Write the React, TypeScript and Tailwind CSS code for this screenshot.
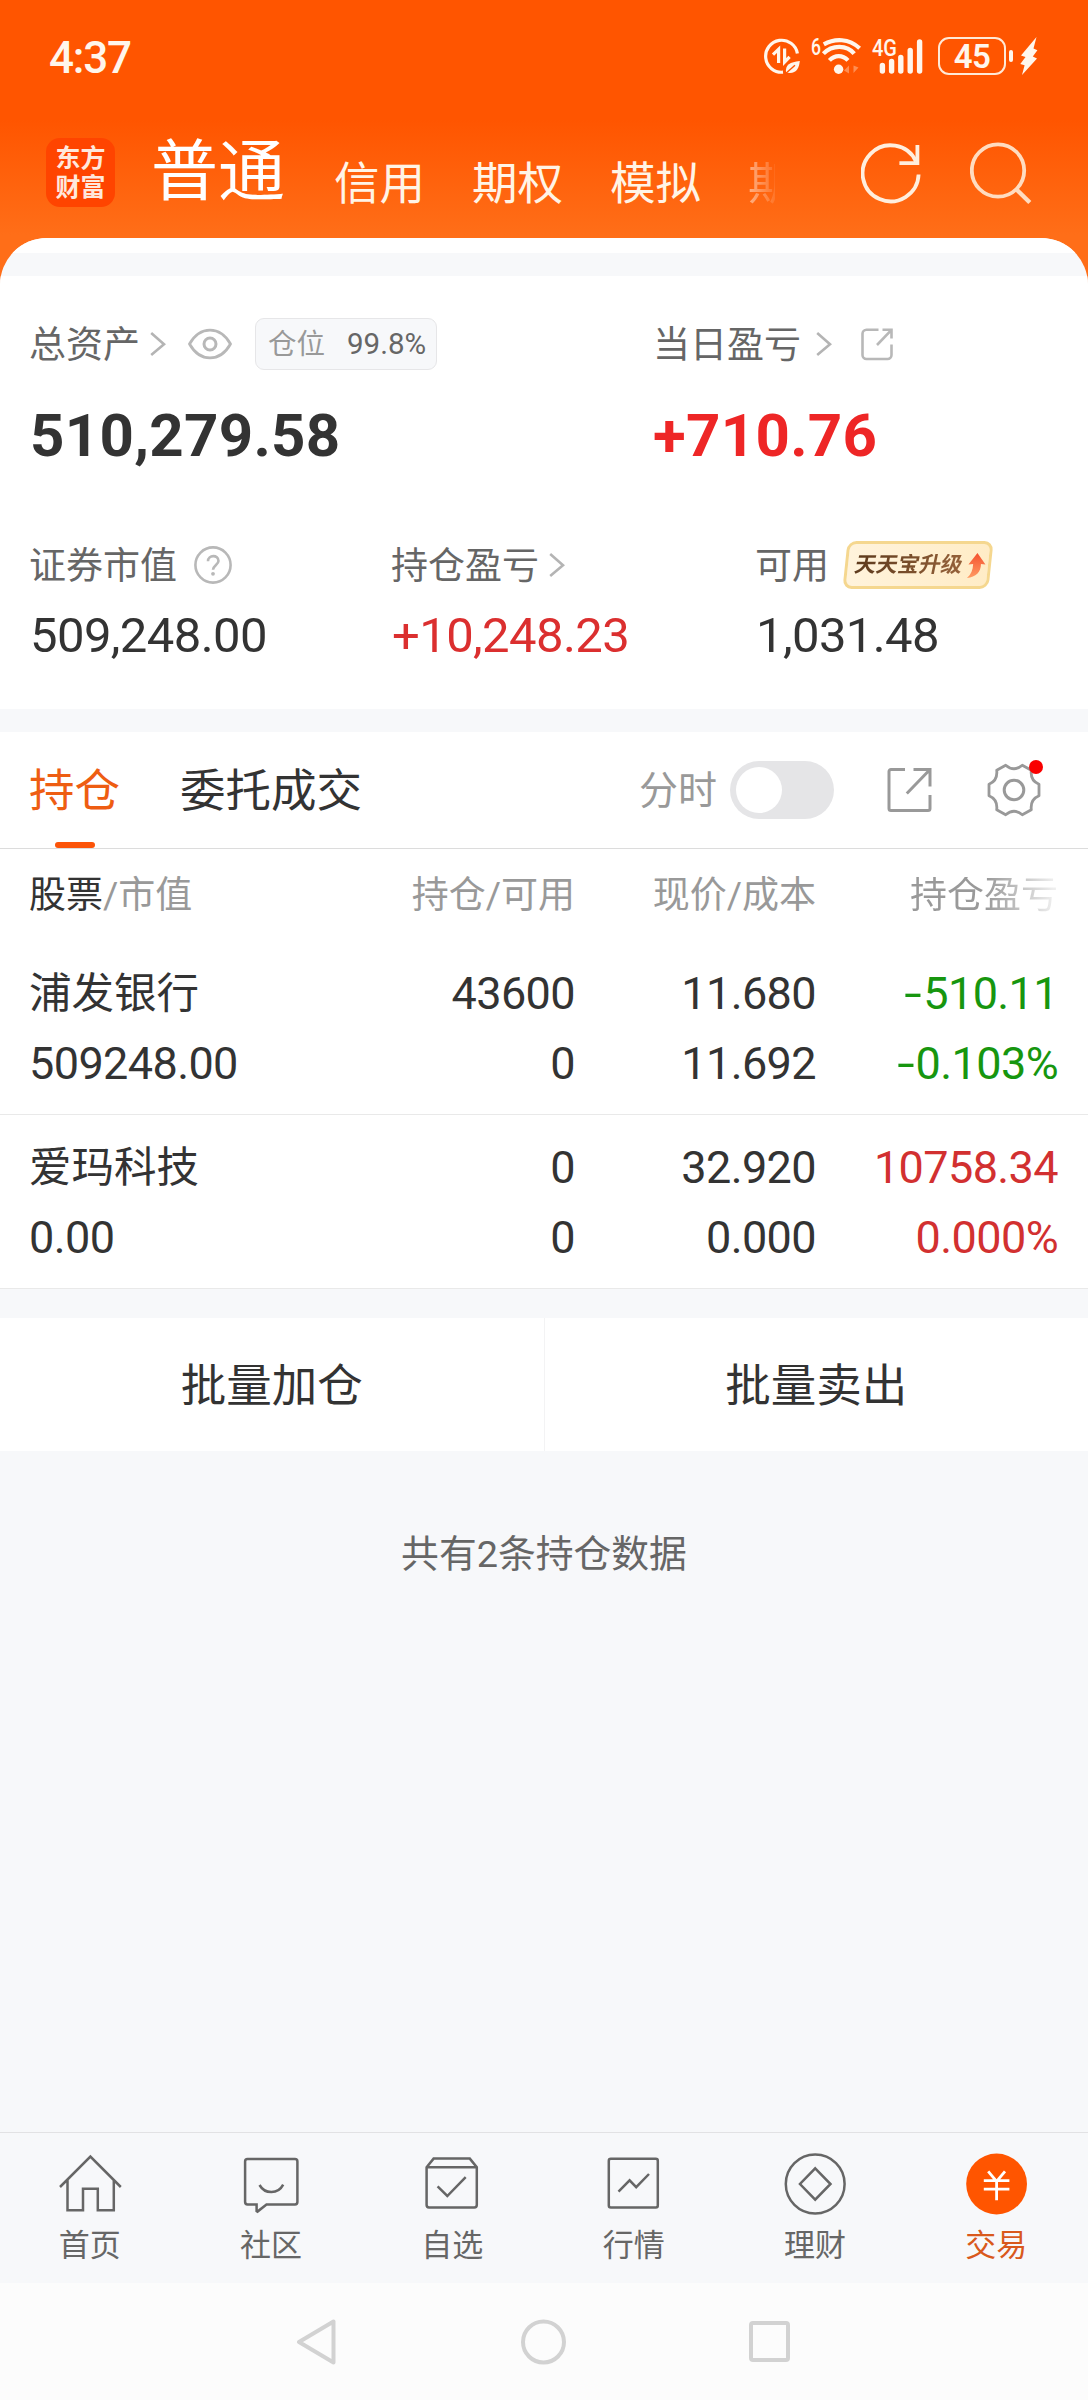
import React from "react";

const holdings = [
  {
    name: "浦发银行",
    value: "509248.00",
    amount: "43600",
    available: "0",
    price: "11.680",
    cost: "11.692",
    sign: "-",
    profit: "510.11",
    rate: "0.103%",
    color: "text-[#17960f]",
  },
  {
    name: "爱玛科技",
    value: "0.00",
    amount: "0",
    available: "0",
    price: "32.920",
    cost: "0.000",
    sign: "",
    profit: "10758.34",
    rate: "0.000%",
    color: "text-[#d23030]",
  },
];

const tabs = [
  {
    label: "首页",
    icon: (
      <path d="M0 34 30.4 3.6 60.8 34M7.5 27V57.2H23V35.8H37.8V57.2H53.8V27" />
    ),
  },
  {
    label: "社区",
    icon: (
      <>
        <path d="M6.5 6H54a2.4 2.4 0 0 1 2.4 2.4V49a2.4 2.4 0 0 1-2.4 2.4H25.5L16.5 58.6 15.6 58V51.4H6.5A2.4 2.4 0 0 1 4.1 49V8.4A2.4 2.4 0 0 1 6.5 6Z" />
        <path d="M18.5 32C24 41.5 37 41.5 42.2 31.6" />
      </>
    ),
  },
  {
    label: "自选",
    icon: (
      <>
        <path d="M4.6 14.2 11.6 5.6H47.8L54.8 14.2V52a2.4 2.4 0 0 1-2.4 2.4H7A2.4 2.4 0 0 1 4.6 52ZM4.6 14.2H54.8" />
        <path d="M15.6 33.4 25.3 43 43.7 24.2" />
      </>
    ),
  },
  {
    label: "行情",
    icon: (
      <>
        <rect x="4.8" y="5.8" width="49" height="48.8" rx="2" />
        <path d="M14.5 38.7 25.6 27.4 32.2 34.2 45 21" />
      </>
    ),
  },
  {
    label: "理财",
    icon: (
      <>
        <circle cx="30.2" cy="31" r="29.4" />
        <path d="M30.2 15.4 45.5 31 30.2 46.6 15 31Z" />
      </>
    ),
  },
  {
    label: "交易",
    active: true,
    icon: (
      <>
        <circle cx="30.6" cy="31" r="30.4" fill="#ff5500" stroke="none" />
        <path
          d="M22.2 18.3 30.6 28.4 39 18.3M17.8 27.6H43.4M17.8 36.2H43.4M30.6 28V47.3"
          stroke="#fff"
          strokeWidth="2.8"
        />
      </>
    ),
  },
];

function Chevron({ className = "" }: { className?: string }) {
  return (
    <svg
      className={`h-6 w-4 shrink-0 ${className}`}
      viewBox="0 0 16 24"
      fill="none"
      stroke="#b4b4b4"
      strokeWidth="2.6"
    >
      <path d="M1.2 1 14 12.2 1.2 23" />
    </svg>
  );
}

function StatusBar() {
  return (
    <div className="flex h-[112px] items-center pl-[49px] text-[#fff6ec]">
      <span className="w-[715px] pt-1 text-[44px] leading-none font-medium tracking-[-1.2px]">
        4:37
      </span>

      {/* data saver */}
      <svg className="h-10 w-10" viewBox="0 0 40 40" fill="none">
        <path
          d="M33.4 17.5A16 16 0 1 0 19 36.2"
          stroke="currentColor"
          strokeWidth="3.2"
        />
        <path
          d="M9 18.6 14.6 13.2V27M20.6 12.5V26L25.6 20.8"
          stroke="currentColor"
          strokeWidth="3.2"
        />
        <path d="M35.8 25C26 26 21 29 22 36.5 32 38.5 35 33 35.8 25Z" fill="currentColor" />
        <path d="M20.5 38.5 31 29.3" stroke="#ff5500" strokeWidth="1.4" />
      </svg>

      {/* wifi */}
      <svg className="ml-[7px] h-10 w-[52px] overflow-visible" viewBox="0 0 52 40" fill="none">
        <text x="0" y="19" fontSize="23" fontWeight="500" fill="currentColor" textLength="10" lengthAdjust="spacingAndGlyphs">
          6
        </text>
        <g stroke="currentColor" strokeWidth="4.2">
          <path d="M12.8 8.4C24 2 38 2.5 48.6 12.2" />
          <path d="M12.4 17.6C21 8.5 36 8.5 43.2 17.6" />
          <path d="M18.4 24.4C24 18.6 31.5 18.6 37 24.4" />
        </g>
        <circle cx="27.6" cy="33.2" r="4.7" fill="currentColor" />
        <path d="M33 34.5 38 29.5V37.5ZM47.5 31.5 42.5 37V29.5ZM40.2 29V38" fill="#ff8e52" />
      </svg>

      {/* signal */}
      <svg className="ml-[9px] h-10 w-[54px] overflow-visible" viewBox="0 0 54 40" fill="none">
        <text x="0" y="20" fontSize="23" fontWeight="500" fill="currentColor" textLength="25" lengthAdjust="spacingAndGlyphs">
          4G
        </text>
        <path
          d="M10.4 29.5V35M19.6 25.5V35M28.8 21.5V35M38.2 14.5V35M47.6 6V35"
          stroke="currentColor"
          strokeWidth="5.4"
          strokeLinecap="round"
        />
      </svg>

      <span className="ml-[12px] flex h-[38px] w-[68px] items-center justify-center rounded-[11px] border-[2.6px] border-[#ffe9d6] pt-[1px] text-[33px] leading-none font-semibold tracking-[-0.5px]">
        45
      </span>
      <span className="ml-[3px] h-3 w-1 rounded-full bg-current" />
      <svg className="ml-[7px] h-[38px] w-[18px]" viewBox="0 0 18 38" fill="currentColor">
        <path d="M16.5 0 1 18.5 5.5 20 .3 27 4.6 28.3 2 38 17 21.5 12.8 19.6 17.4 13.2 13.5 11.6Z" />
      </svg>
    </div>
  );
}

function Header() {
  return (
    <div className="h-[238px]">
      <StatusBar />
      <div className="flex h-[121px] items-center text-[45.5px] leading-none text-[#fff4e6]">
        <div className="ml-[46px] flex h-[69px] w-[69px] items-center justify-center rounded-[14px] bg-[#ff4400]">
          <p className="w-[50px] text-[25px] leading-[29px] font-bold break-all text-[#ffe8dc]">
            东方财富
          </p>
        </div>
        <span className="ml-9 text-[67px] text-white">普通</span>
        <span className="ml-[49px] pt-6">信用</span>
        <span className="ml-[47px] pt-6">期权</span>
        <span className="ml-[47px] pt-6">模拟</span>
        <span className="ml-[47px] w-[27px] overflow-hidden bg-linear-to-r from-white/50 to-white/10 bg-clip-text pt-6 whitespace-nowrap text-transparent">
          期
        </span>
        <svg
          className="ml-[86px] h-[62px] w-[62px]"
          viewBox="0 0 62 62"
          fill="none"
          stroke="#ffeedd"
          strokeWidth="3.8"
        >
          <path d="M57.6 32.5A28 28 0 1 1 55 19.5" />
          <path d="M56.4 3V21.2H38.4" />
        </svg>
        <svg
          className="ml-[47px] h-[64px] w-[64px]"
          viewBox="0 0 64 64"
          fill="none"
          stroke="#ffdcc0"
          strokeWidth="3.8"
        >
          <circle cx="28" cy="29.5" r="26.2" />
          <path d="M46.5 48.5 59.8 61.5" strokeWidth="4.4" />
        </svg>
      </div>
    </div>
  );
}

function Assets() {
  return (
    <section className="h-[433px] bg-white pt-[42px] pl-[30px] text-[37px] leading-none text-[#666]">
      <div className="flex">
        <div className="w-[623px]">
          <div className="flex h-[52px] items-center">
            <span className="-ml-px pt-0.5">总资产</span>
            <Chevron className="ml-[10px]" />
            <svg
              className="ml-[22px] h-8 w-11"
              viewBox="0 0 44 32"
              fill="none"
              stroke="#b8b8b8"
              strokeWidth="2.8"
            >
              <path d="M1.5 16C12-2.5 32-2.5 42.5 16 32 34.5 12 34.5 1.5 16Z" strokeLinejoin="round" />
              <circle cx="22" cy="16" r="6" strokeWidth="3" />
            </svg>
            <div className="ml-[23px] flex h-[52px] w-[182px] items-center rounded-[9px] border border-[#e6e6e8] bg-[#f7f8fa] pt-0.5 pl-3 text-[28.5px] text-[#999]">
              仓位
              <span className="ml-[22px] text-[29.5px] text-[#666]">99.8%</span>
            </div>
          </div>
          <div className="mt-[31px] text-[60px] leading-[70px] font-bold tracking-[0.3px] text-[#333]">
            510,279.58
          </div>
        </div>
        <div>
          <div className="flex h-[52px] items-center">
            <span className="pt-0.5">当日盈亏</span>
            <Chevron className="ml-[15px]" />
            <svg
              className="ml-[28px] h-[34px] w-[34px]"
              viewBox="0 0 34 34"
              fill="none"
              stroke="#b8b8b8"
              strokeWidth="2.6"
            >
              <path d="M18.5 2.8H6.5a4 4 0 0 0-4 4V28a4 4 0 0 0 4 4H27.5a4 4 0 0 0 4-4V17.5M22.5 2.8H31.5V11.5M31 3.3 17 18" />
            </svg>
          </div>
          <div className="mt-[31px] text-[60px] leading-[70px] font-bold tracking-[0.3px] text-[#ee2626]">
            +710.76
          </div>
        </div>
      </div>

      <div className="mt-[70px] flex">
        <div className="w-[362px]">
          <div className="flex h-12 items-center">
            <span className="-ml-px pt-0.5">证券市值</span>
            <svg className="ml-[17px] h-[38px] w-[38px]" viewBox="0 0 38 38" fill="none" stroke="#b8b8b8">
              <circle cx="19" cy="19" r="17.6" strokeWidth="2.6" />
              <path
                d="M14 15.2C14 8.5 24.5 8.5 24.5 15 24.5 18.5 19 19.5 19 23.8"
                strokeWidth="2.6"
              />
              <circle cx="19" cy="27.8" r="1.9" fill="#b8b8b8" stroke="none" />
            </svg>
          </div>
          <div className="mt-[17px] text-[49px] leading-[60px] tracking-[-0.6px] text-[#333]">
            509,248.00
          </div>
        </div>
        <div className="w-[364px]">
          <div className="flex h-12 items-center">
            <span className="-ml-px pt-0.5">持仓盈亏</span>
            <Chevron className="ml-[10px]" />
          </div>
          <div className="mt-[17px] text-[49px] leading-[60px] tracking-[-0.6px] text-[#db2f2f]">
            +10,248.23
          </div>
        </div>
        <div>
          <div className="flex h-12 items-center">
            <span className="-ml-px pt-0.5">可用</span>
            <div className="ml-[16px] flex h-12 w-[146px] -skew-x-6 items-center rounded-[9px] border-[3px] border-[#f5d78f] bg-linear-to-r from-[#fff3dc] to-[#ffecc6] pl-[7px]">
              <span className="-skew-x-6 bg-linear-to-r from-[#5d3a1c] to-[#96623a] bg-clip-text text-[21.5px] font-bold text-transparent">
                天天宝升级
              </span>
              <svg className="ml-[3px] h-[25px] w-5 skew-x-6" viewBox="0 0 20 25">
                <defs>
                  <linearGradient id="up" x1="0" y1="0" x2="0" y2="1">
                    <stop offset="0" stopColor="#f4512f" />
                    <stop offset="1" stopColor="#ff9b63" />
                  </linearGradient>
                </defs>
                <path
                  d="M11.5 0 19.5 11.5 15 11C15 19 10 24 1 25 5 21.5 7 17 7.2 11L2.5 11.5Z"
                  fill="url(#up)"
                />
              </svg>
            </div>
          </div>
          <div className="mt-[17px] text-[49px] leading-[60px] tracking-[-0.6px] text-[#333]">
            1,031.48
          </div>
        </div>
      </div>
    </section>
  );
}

function Positions() {
  return (
    <section className="bg-white">
      {/* tab bar */}
      <div className="flex h-[117px] items-center border-b border-[#dcdcdc] pl-[29px] text-[45.5px] leading-none text-[#333]">
        <div className="relative flex h-full items-center pt-1 text-[#ee5d12]">
          持仓
          <span className="absolute bottom-0 left-[26px] h-1.5 w-10 rounded-full bg-[#fc5409]" />
        </div>
        <span className="ml-[60px] pt-1">委托成交</span>
        <span className="ml-[277px] pt-0.5 text-[39px] text-[#999]">分时</span>
        <div className="ml-[13px] flex h-[58px] w-[104px] items-center rounded-full bg-[#e5e5e7] pl-1.5">
          <span className="h-[46px] w-[46px] rounded-full bg-white" />
        </div>
        <svg
          className="ml-[53px] h-[46px] w-[46px]"
          viewBox="0 0 46 46"
          fill="none"
          stroke="#999"
          strokeWidth="3"
        >
          <path d="M18 2.5H4a2 2 0 0 0-2 2V41.5a2 2 0 0 0 2 2H41a2 2 0 0 0 2-2V28M26.5 2.5H43V19.5M42.5 3 19.8 26.5" />
        </svg>
        <div className="relative ml-[53px] h-14 w-14">
          <svg className="h-14 w-14" viewBox="0 0 56 56" fill="none" stroke="#999" strokeWidth="2.8">
            <path d="M19.7 3.2 10.7 8.2C11.5 15 9.5 19.5 3 22.2V33.8C9.5 36.5 11.5 41 10.7 47.8L19.7 52.8C25 48.3 31 48.3 36.3 52.8L45.3 47.8C44.5 41 46.5 36.5 53 33.8V22.2C46.5 19.5 44.5 15 45.3 8.2L36.3 3.2C31 7.7 25 7.7 19.7 3.2Z" strokeLinejoin="round" />
            <circle cx="28" cy="28" r="9.8" strokeWidth="3" />
          </svg>
          <span className="absolute -top-0.5 -right-px h-3.5 w-3.5 rounded-full bg-[#f90000]" />
        </div>
      </div>

      {/* column titles */}
      <div className="grid h-[92px] grid-cols-[270px_276px_241px_242px] items-center pt-px pl-[29px] text-right text-[37px] leading-none text-[#999]">
        <span className="text-left">
          <span className="text-[#333]">股票</span>/市值
        </span>
        <span>持仓/可用</span>
        <span>现价/成本</span>
        <span className="bg-linear-to-r from-[#999] from-70% to-[#eee] to-98% bg-clip-text text-transparent">
          持仓盈亏
        </span>
      </div>

      {holdings.map((item, idx) => (
        <div
          key={idx}
          className="grid h-[174px] grid-cols-[270px_276px_241px_242px] border-b border-[#e9e9e9] pt-[18px] pl-[29px] text-right text-[45px] leading-[70px] tracking-[-0.6px] text-[#333]"
        >
          <div className="text-left">
            <div className="text-[42.5px] tracking-normal">{item.name}</div>
            <div>{item.value}</div>
          </div>
          <div>
            <div>{item.amount}</div>
            <div>{item.available}</div>
          </div>
          <div>
            <div>{item.price}</div>
            <div>{item.cost}</div>
          </div>
          <div className={item.color}>
            <div>
              <span className="mr-0.5 inline-block origin-right scale-x-140">{item.sign}</span>
              {item.profit}
            </div>
            <div>
              <span className="mr-0.5 inline-block origin-right scale-x-140">{item.sign}</span>
              {item.rate}
            </div>
          </div>
        </div>
      ))}
    </section>
  );
}

function TabBar() {
  return (
    <nav className="grid h-[151px] grid-cols-6 border-t border-[#e2e2e4] bg-[#f7f8fa] pt-5">
      {tabs.map((tab) => (
        <div key={tab.label} className="flex flex-col items-center">
          <svg
            className="h-[62px] w-[62px] overflow-visible"
            viewBox="0 0 62 62"
            fill="none"
            stroke="#666"
            strokeWidth="2.5"
          >
            {tab.icon}
          </svg>
          <span
            className={`mt-[15px] pr-0.5 text-[31px] leading-none ${tab.active ? "text-[#d9591c]" : "text-[#666]"}`}
          >
            {tab.label}
          </span>
        </div>
      ))}
    </nav>
  );
}

export default function App() {
  return (
    <div className="flex h-[2400px] w-[1088px] flex-col bg-[linear-gradient(#ff5500_120px,#ff6e18_235px)] font-[Roboto,'Noto_Sans_CJK_SC',sans-serif]">
      <Header />
      <main className="flex flex-1 flex-col overflow-hidden rounded-t-[47px] bg-[#f7f8fa]">
        <div className="h-[15px] bg-white" />
        <div className="h-[23px]" />
        <Assets />
        <div className="h-[23px]" />
        <Positions />

        <div className="mt-[29px] flex h-[133px] items-center bg-white pt-0 text-[45.5px] leading-none text-[#333]">
          <div className="flex h-full flex-1 items-center justify-center border-r border-[#f3f3f4] pt-1">
            批量加仓
          </div>
          <div className="flex h-full flex-1 items-center justify-center pt-1">批量卖出</div>
        </div>
        <p className="mt-[75px] text-center text-[37.8px] leading-[56px] text-[#666]">
          共有2条持仓数据
        </p>
        <div className="flex-1" />
        <TabBar />

        {/* system navigation */}
        <div className="flex h-[117px] items-center justify-center gap-[180px] bg-[#fcfcfc]">
          <svg className="h-[46px] w-[46px]" viewBox="0 0 46 46" fill="none" stroke="#d2d2d2" strokeWidth="4">
            <path d="M38.5 2.5V43.5L4 23Z" strokeLinejoin="round" />
          </svg>
          <svg className="h-[46px] w-[46px]" viewBox="0 0 46 46" fill="none" stroke="#d2d2d2" strokeWidth="4">
            <circle cx="22.5" cy="23" r="20.5" />
          </svg>
          <svg className="h-[46px] w-[46px]" viewBox="0 0 46 46" fill="none" stroke="#d2d2d2" strokeWidth="4">
            <rect x="4" y="4" width="37" height="37" rx="2" />
          </svg>
        </div>
      </main>
    </div>
  );
}
